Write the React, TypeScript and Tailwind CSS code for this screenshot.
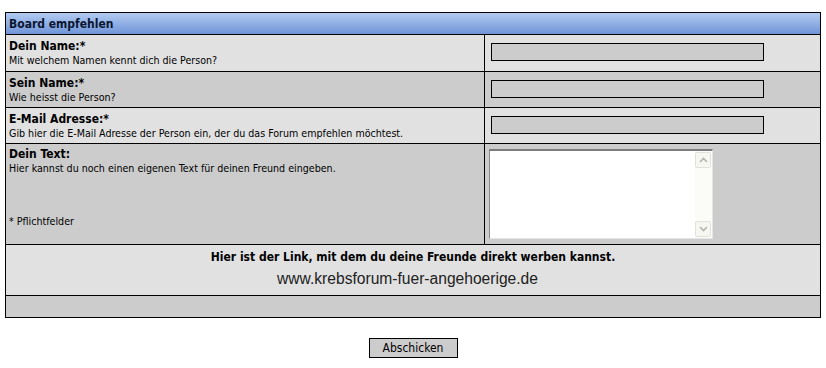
import React from "react";

const F = { fontFamily: "'DejaVu Sans Condensed', 'DejaVu Sans', sans-serif" };

function Chevron({ up }: { up?: boolean }) {
  return (
    <svg width="9" height="6" viewBox="0 0 9 6">
      <path
        d={up ? "M1 5 L4.5 1.5 L8 5" : "M1 1 L4.5 4.5 L8 1"}
        fill="none"
        stroke="#b4b4ae"
        strokeWidth="1.6"
      />
    </svg>
  );
}

function Row({
  bg,
  h,
  title,
  sub,
  children,
}: {
  bg: string;
  h: string;
  title: string;
  sub: string;
  children: React.ReactNode;
}) {
  return (
    <div className={`flex ${h} ${bg} border-b border-black`}>
      <div className="w-[479px] shrink-0 border-r border-black pl-[3px] pt-[4px] text-black">
        <div className="text-[12px] font-bold leading-[15px]">{title}</div>
        <div className="text-[10.6px] leading-[13px]">{sub}</div>
      </div>
      <div className="flex-1">{children}</div>
    </div>
  );
}

function Input() {
  return <div className="ml-[6px] mt-[8px] h-[18px] w-[273px] border border-black bg-[#cccccc]" />;
}

export default function App() {
  return (
    <div className="w-[826px] h-[368px] bg-white" style={F}>
      <div className="ml-[5px] mt-[12px] w-[816px] border border-black">
        <div className="h-[22px] border-b border-black bg-gradient-to-b from-[#b3cbf0] to-[#7094d8] pl-[3px] text-[12px] font-bold leading-[22px] text-[#0b1630]">
          Board empfehlen
        </div>
        <Row bg="bg-[#e1e1e1]" h="h-[37px]" title="Dein Name:*" sub="Mit welchem Namen kennt dich die Person?">
          <Input />
        </Row>
        <Row bg="bg-[#cccccc]" h="h-[36px]" title="Sein Name:*" sub="Wie heisst die Person?">
          <Input />
        </Row>
        <Row
          bg="bg-[#e1e1e1]"
          h="h-[36px]"
          title="E-Mail Adresse:*"
          sub="Gib hier die E-Mail Adresse der Person ein, der du das Forum empfehlen möchtest."
        >
          <Input />
        </Row>
        <div className="flex h-[101px] bg-[#cccccc] border-b border-black">
          <div className="w-[479px] shrink-0 border-r border-black pl-[3px] pt-[3px] text-black flex flex-col">
            <div className="text-[12px] font-bold leading-[15px]">Dein Text:</div>
            <div className="text-[10.6px] leading-[13px]">
              Hier kannst du noch einen eigenen Text für deinen Freund eingeben.
            </div>
            <div className="mt-[40px] text-[10.6px] leading-[13px]">* Pflichtfelder</div>
          </div>
          <div className="flex-1 pl-[4px] pt-[5px]">
            <div className="flex h-[90px] w-[224px] border-t-2 border-l border-t-[#7d7d7d] border-l-[#8a8a8a] border-b border-r border-b-[#e6e6e6] border-r-[#e6e6e6] bg-white">
              <textarea className="flex-1 resize-none bg-white outline-none" />
              <div className="flex w-[17px] flex-col justify-between bg-[#fbfbf8] py-[1px] pr-[1px]">
                <div className="flex h-[16px] items-center justify-center rounded-[2px] border border-[#e2e2da] bg-[#f7f7f2]">
                  <Chevron up />
                </div>
                <div className="flex h-[16px] items-center justify-center rounded-[2px] border border-[#e2e2da] bg-[#f7f7f2]">
                  <Chevron />
                </div>
              </div>
            </div>
          </div>
        </div>
        <div className="h-[51px] bg-[#e1e1e1] border-b border-black flex flex-col items-center text-black">
          <div className="mt-[5px] text-[12px] font-bold leading-[15px]">
            Hier ist der Link, mit dem du deine Freunde direkt werben kannst.
          </div>
          <div
            className="mt-[4px] mr-[11px] text-[15.6px] leading-[19px] text-[#222]"
            style={{ fontFamily: "'Liberation Sans', Arial, sans-serif" }}
          >
            www.krebsforum-fuer-angehoerige.de
          </div>
        </div>
        <div className="h-[21px] bg-[#cccccc]" />
      </div>
      <div className="mt-[20px] flex justify-center">
        <button className="h-[20px] w-[89px] border border-black bg-[#cccccc] text-[12px] leading-[18px] text-black" style={F}>
          Abschicken
        </button>
      </div>
    </div>
  );
}
